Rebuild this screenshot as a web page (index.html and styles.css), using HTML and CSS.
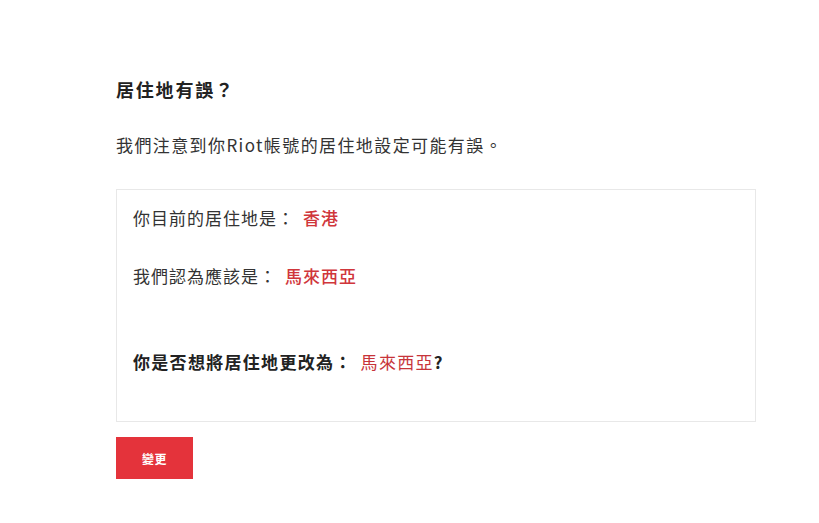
FILE: index.html
```html
<!DOCTYPE html>
<html lang="zh-Hant">
<head>
<meta charset="utf-8">
<link rel="stylesheet" href="styles.css">
</head>
<body>
<main class="page">
  <h1 class="title">居住地有誤？</h1>
  <p class="intro">我們注意到你Riot帳號的居住地設定可能有誤。</p>
  <section class="box">
    <p class="line">你目前的居住地是：<span class="hl">香港</span></p>
    <p class="line line-2">我們認為應該是：<span class="hl">馬來西亞</span></p>
    <p class="line line-q">你是否想將居住地更改為：<span class="hl">馬來西亞</span>?</p>
  </section>
  <button class="btn">變更</button>
</main>
</body>
</html>
```
FILE: styles.css
```css
html, body {
  margin: 0;
  padding: 0;
  background: #ffffff;
}
body {
  font-family: "Noto Sans CJK TC", "Noto Sans", sans-serif;
  color: #333333;
}
.page {
  padding: 76px 0 0 116px;
  width: 640px;
  display: flex;
  flex-direction: column;
  align-items: flex-start;
}
.title {
  margin: 0;
  font-size: 18px;
  line-height: 26px;
  letter-spacing: 1.8px;
  font-weight: 700;
  color: #222222;
}
.intro {
  margin: 30px 0 0 0;
  font-size: 17px;
  line-height: 26px;
  letter-spacing: 1.4px;
  color: #333333;
}
.box {
  box-sizing: border-box;
  margin-top: 31px;
  width: 640px;
  height: 233px;
  border: 1px solid #e8e8e8;
  padding: 15px 16px 0 16px;
}
.line {
  margin: 0;
  font-size: 17px;
  line-height: 26px;
  letter-spacing: 1px;
  color: #333333;
}
.line-2 {
  margin-top: 32px;
}
.line-q {
  margin-top: 60px;
  font-weight: 700;
  letter-spacing: 1.3px;
  color: #222222;
}
.hl {
  margin-left: 8px;
  font-weight: 500;
  color: #d0363b;
}
.line-q .hl {
  font-weight: 400;
  color: #c7343a;
}
.btn {
  margin-top: 15px;
  width: 77px;
  height: 42px;
  border: none;
  background: #e4333b;
  color: #ffffff;
  font-family: "Noto Sans CJK TC", sans-serif;
  font-size: 12px;
  font-weight: 700;
  letter-spacing: 0.5px;
  padding: 0;
}
```
